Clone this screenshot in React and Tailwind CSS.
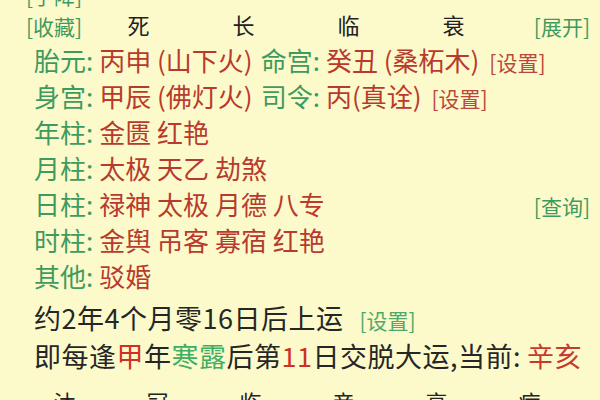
import React from "react";

const green = "text-[#3f9a5f]";
const red = "text-[#b83a2e]";

const Tag = ({ children, color = green }) => (
  <span className={`text-[21px] ${color}`}>[{children}]</span>
);

const rows = [
  { label: "胎元", value: "丙申 (山下火)", extra: { label: "命宫", value: "癸丑 (桑柘木)" }, tag: "设置" },
  { label: "身宫", value: "甲辰 (佛灯火)", extra: { label: "司令", value: "丙(真诠)" }, tag: "设置" },
  { label: "年柱", value: "金匮 红艳" },
  { label: "月柱", value: "太极 天乙 劫煞" },
  { label: "日柱", value: "禄神 太极 月德 八专", right: "查询" },
  { label: "时柱", value: "金舆 吊客 寡宿 红艳" },
  { label: "其他", value: "驳婚" },
];

const topStages = ["死", "长", "临", "衰"];
const bottomStages = ["沐", "冠", "临", "帝", "衰", "病"];

export default function App() {
  return (
    <div
      className="w-[600px] h-[400px] overflow-hidden bg-[#fcfacb] text-[26px] leading-none text-[#262626]"
      style={{ fontFamily: '"Noto Sans CJK SC", "Noto Sans", sans-serif' }}
    >
      <div className="mt-[-15px]">
        <div className="h-[21px] flex items-center pl-[26px]">
          <Tag>手降</Tag>
        </div>

        <div className="h-[36px] flex items-center pl-[26px] pr-[10px]">
          <div className="w-[60px]">
            <Tag>收藏</Tag>
          </div>
          <div className="flex text-[22px] text-[#222]">
            {topStages.map((s, i) => (
              <div key={i} className="w-[105px] text-center">{s}</div>
            ))}
          </div>
          <span className="ml-auto">
            <Tag>展开</Tag>
          </span>
        </div>

        {rows.map((r, i) => (
          <div key={i} className="h-[36px] flex items-center pl-[34px] pr-[10px]">
            <span className={green}>{r.label}: </span>
            <span className={`${red} ml-[6px]`}>{r.value}</span>
            {r.extra && (
              <>
                <span className={`${green} ml-[8px]`}>{r.extra.label}: </span>
                <span className={`${red} ml-[6px]`}>{r.extra.value}</span>
              </>
            )}
            {r.tag && (
              <span className="ml-[10px]">
                <Tag color="text-[#b9473b]">{r.tag}</Tag>
              </span>
            )}
            {r.right && (
              <span className="ml-auto">
                <Tag>{r.right}</Tag>
              </span>
            )}
          </div>
        ))}

        <div className="h-[36px] mt-[5px] flex items-center pl-[34px] text-[27px]">
          <span className="tracking-[0.5px]">约2年4个月零16日后上运</span>
          <span className="ml-[16px]">
            <Tag color="text-[#4fa86c]">设置</Tag>
          </span>
        </div>

        <div className="h-[36px] mt-[2px] flex items-center pl-[34px] whitespace-nowrap text-[27px] tracking-[0.5px]">
          <span>即每逢</span>
          <span className="text-[#d0301f]">甲</span>
          <span>年</span>
          <span className="text-[#3fae64]">寒露</span>
          <span>后第</span>
          <span className="text-[#d0301f]">11</span>
          <span>日交脱大运,当前: </span>
          <span className="text-[#c9392b] ml-[6px]">辛亥</span>
        </div>

        <div className="h-[36px] mt-[10px] flex items-center pl-[18px] text-[22px] text-[#222]">
          {bottomStages.map((s, i) => (
            <div key={i} className="w-[93px] text-center">{s}</div>
          ))}
        </div>
      </div>
    </div>
  );
}
